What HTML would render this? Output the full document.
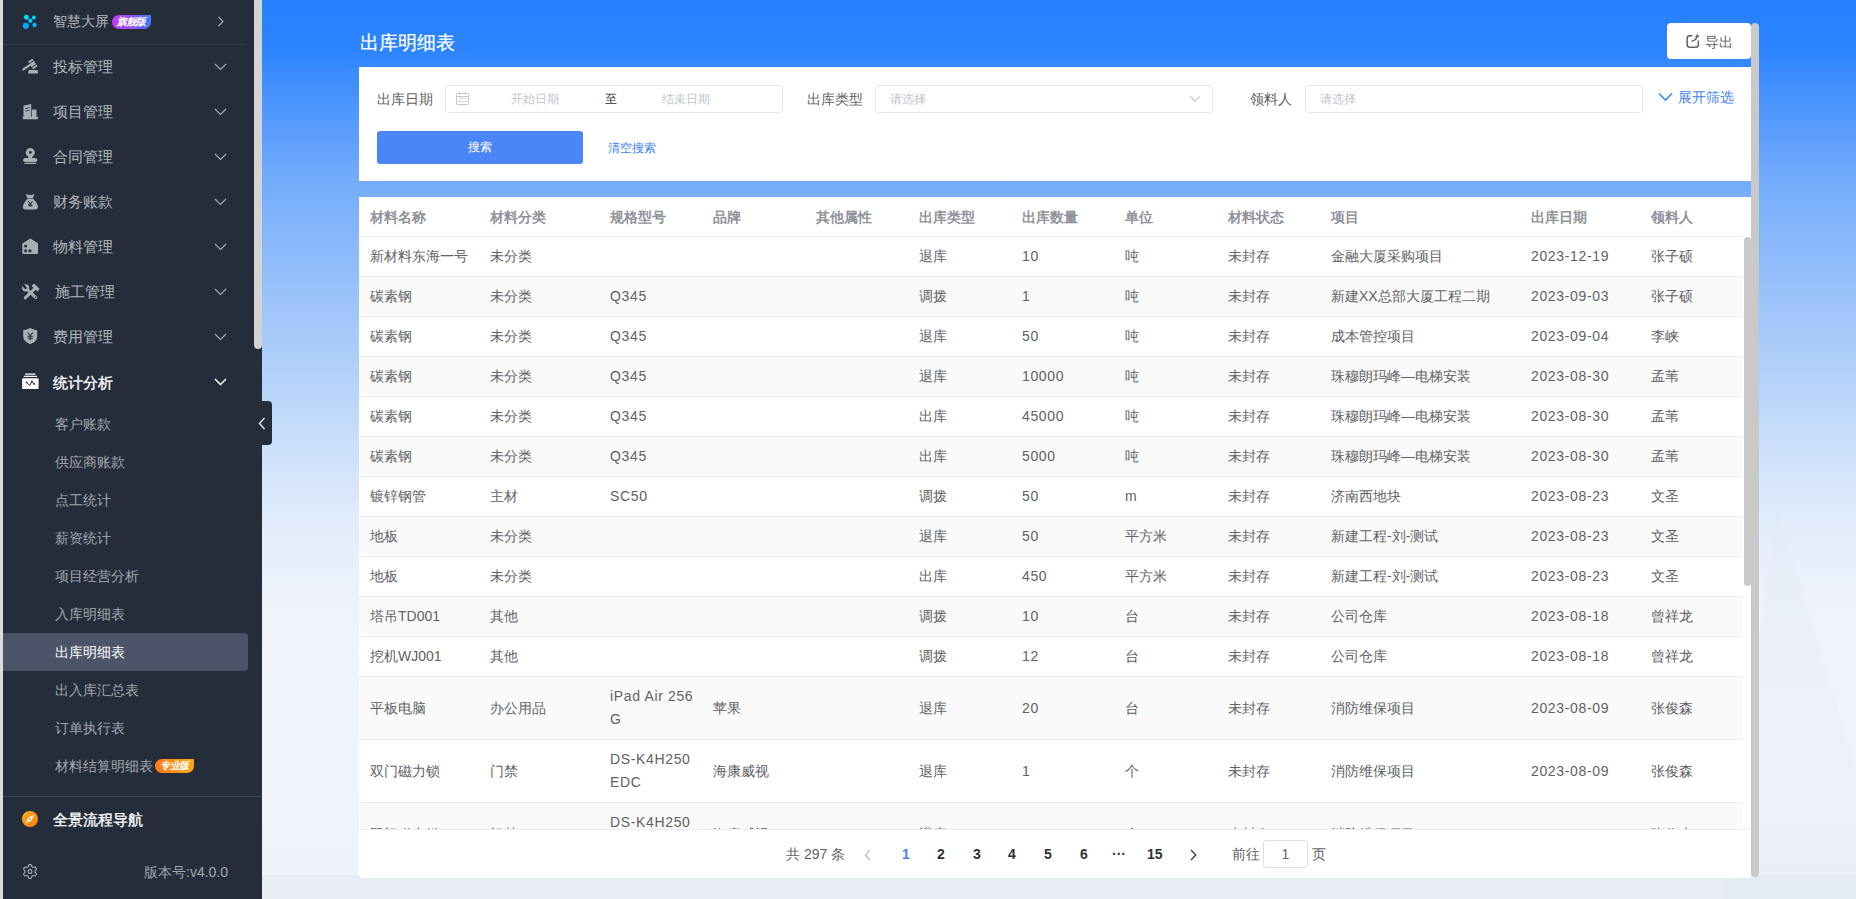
<!DOCTYPE html>
<html><head><meta charset="utf-8">
<style>
*{box-sizing:border-box;margin:0;padding:0}
html,body{width:1856px;height:899px;overflow:hidden;font-family:"Liberation Sans",sans-serif;}
body{position:relative;background:linear-gradient(180deg,#2680ff 0px,#2c84ff 50px,#4a94fd 100px,#6aa6fc 160px,#7ab0fb 200px,#9cc3fa 300px,#c2dafa 420px,#dfeafb 510px,#eef3fb 600px,#f1f5fb 780px,#eef2f8 899px);}
.a{position:absolute;white-space:nowrap}
#side{position:absolute;left:0;top:0;width:262px;height:899px;background:#252d3b}
.mt{position:absolute;left:53px;font-size:15px;line-height:20px;color:#b3b8bd;white-space:nowrap}
.ic{position:absolute;left:22px;width:16px;height:16px}
.chev{position:absolute;left:214px;width:13px;height:8px}
.st{position:absolute;left:55px;font-size:14px;line-height:18px;color:#a3a8ae;white-space:nowrap}
.card{position:absolute;background:#fff}
.lbl{position:absolute;font-size:14px;line-height:18px;color:#606266;white-space:nowrap}
.inp{position:absolute;border:1px solid #e4e7ed;border-radius:4px;background:#fff}
.ph{position:absolute;font-size:12px;line-height:16px;color:#c0c4cc;white-space:nowrap}
.th{position:absolute;top:0;height:39px;padding-left:11px;font-size:14px;font-weight:bold;line-height:40px;color:#909399;white-space:nowrap}
.tr{position:absolute;left:0;width:1384px;border-bottom:1px solid #ebeef5}
.td{position:absolute;top:0;padding:8px 10px 8px 11px;font-size:14px;line-height:23px;color:#606266;display:flex;align-items:center}
.td span{white-space:nowrap}
.pg{position:absolute;top:648px;font-size:14px;line-height:18px;font-weight:bold;white-space:nowrap}
</style></head><body>
<div id="side">
  <div class="a" style="left:0;top:0;width:3px;height:899px;background:#dcdcdc"></div>
  <div class="a" style="left:254px;top:0;width:8px;height:349px;background:#d3d3d3;border-radius:0 0 4px 4px"></div>
  <svg class="ic" style="top:14px;width:16px;height:16px" viewBox="0 0 16 16"><circle cx="4.4" cy="3.2" r="2.45" fill="#00e3f6"/><circle cx="11.9" cy="3.5" r="1.9" fill="#00d6f7"/><circle cx="8.3" cy="6.8" r="2.2" fill="#00c6f9"/><circle cx="3.9" cy="11.8" r="3.1" fill="#00a4ff"/><circle cx="12.5" cy="11" r="2.2" fill="#00b4fb"/></svg>
  <div class="mt" style="top:12px;font-size:14px;line-height:18px">智慧大屏</div>
  <div class="a" style="left:112px;top:15px;width:39px;height:14px;border-radius:7px 0 7px 7px;background:linear-gradient(90deg,#c83af2,#8d52f6 55%,#3a7cff);color:#fff;font-size:10px;line-height:14px;font-style:italic;font-weight:bold;text-align:center;letter-spacing:-0.5px">旗舰版</div>
  <svg class="a" style="left:217px;top:16px" width="8" height="11" viewBox="0 0 8 11"><path d="M1.5 1 L6 5.5 L1.5 10" fill="none" stroke="#a3a8ae" stroke-width="1.2"/></svg>
  <div class="a" style="left:4px;top:44px;width:242px;height:1px;background:#2f3b4d"></div>
<svg class="ic" style="top:59px" viewBox="0 0 16 16"><g fill="#a9afb4"><g transform="rotate(-33 10.75 5)"><rect x="8.05" y="0.4" width="5.4" height="9.2" rx="0.6"/></g><path d="M6.8 10.9 H15.4 L16.2 14.4 H6 z"/></g><path d="M1.3 10.4 L8.6 5.6" stroke="#a9afb4" stroke-width="2.2" stroke-linecap="round"/><g transform="rotate(-33 10.75 5)"><path d="M8 2.7 H13.5 M8 7.3 H13.5" stroke="#252d3b" stroke-width="0.9"/></g></svg>
<div class="mt" style="top:57px">投标管理</div>
<svg class="chev" style="top:63px" viewBox="0 0 13 8"><path d="M1 1 L6.5 6.5 L12 1" fill="none" stroke="#a3a8ae" stroke-width="1.2"/></svg>
<svg class="ic" style="top:104px" viewBox="0 0 16 16"><g fill="#a9afb4"><path d="M1.5 1.8 L9.2 0 V14 H1.5z"/><rect x="9.9" y="5.6" width="4.6" height="8.4"/><rect x="0.8" y="12.8" width="15.2" height="2.4" rx="0.5"/></g><path d="M3.3 4.6 L7.6 3.6 M3.3 7.1 L7.6 6.3" stroke="#252d3b" stroke-width="0.9"/></svg>
<div class="mt" style="top:102px">项目管理</div>
<svg class="chev" style="top:108px" viewBox="0 0 13 8"><path d="M1 1 L6.5 6.5 L12 1" fill="none" stroke="#a3a8ae" stroke-width="1.2"/></svg>
<svg class="ic" style="top:148px" viewBox="0 0 16 16"><g fill="#a9afb4"><circle cx="8.3" cy="4.6" r="4.5"/><rect x="6.3" y="7" width="4" height="3.6"/><rect x="1.2" y="9.9" width="14" height="4.2" rx="1.8"/><rect x="2.3" y="14.8" width="12.1" height="1.4" rx="0.6"/></g><circle cx="8.3" cy="4.4" r="1.4" fill="#252d3b"/></svg>
<div class="mt" style="top:147px">合同管理</div>
<svg class="chev" style="top:153px" viewBox="0 0 13 8"><path d="M1 1 L6.5 6.5 L12 1" fill="none" stroke="#a3a8ae" stroke-width="1.2"/></svg>
<svg class="ic" style="top:194px" viewBox="0 0 16 16"><g fill="#a9afb4"><path d="M3.6 0 Q8.3 2.2 12.4 0 Q11.6 2.6 10.8 4.4 H5.6 Q4.6 2.6 3.6 0z"/><path d="M5.2 5 H11.4 Q16.2 9.8 16 13.6 Q15.8 15.6 13.6 15.6 H3.2 Q1 15.6 0.8 13.6 Q0.6 9.8 5.2 5z"/></g><path d="M6 7 L8.3 9.5 L10.6 7 M8.3 9.5 V12.8 M6.2 10.1 H10.4 M6.2 11.7 H10.4" fill="none" stroke="#252d3b" stroke-width="1"/></svg>
<div class="mt" style="top:192px">财务账款</div>
<svg class="chev" style="top:198px" viewBox="0 0 13 8"><path d="M1 1 L6.5 6.5 L12 1" fill="none" stroke="#a3a8ae" stroke-width="1.2"/></svg>
<svg class="ic" style="top:238px" viewBox="0 0 16 16"><path fill="#a9afb4" d="M8.3 0.4 L16.2 5.4 V14.8 Q16.2 16 15 16 H1.5 Q0.3 16 0.3 14.8 V5.4z"/><g fill="#252d3b"><rect x="2.3" y="6.8" width="2.7" height="2.5" rx="0.4"/><rect x="2.3" y="11.6" width="2.7" height="2.6" rx="0.4"/><rect x="6.5" y="11.6" width="2.9" height="2.6" rx="0.4"/></g></svg>
<div class="mt" style="top:237px">物料管理</div>
<svg class="chev" style="top:243px" viewBox="0 0 13 8"><path d="M1 1 L6.5 6.5 L12 1" fill="none" stroke="#a3a8ae" stroke-width="1.2"/></svg>
<svg class="ic" style="top:284px;width:18px" viewBox="0 0 18 16"><g stroke="#a9afb4" stroke-width="3" stroke-linecap="round"><path d="M4.6 5 L13.8 13.6"/><path d="M12.4 5 L3.2 13.8"/></g><g fill="#a9afb4"><circle cx="3.6" cy="3.8" r="3.6"/><g transform="rotate(45 13.6 3.4)"><rect x="9.6" y="1.6" width="8" height="3.6" rx="0.6"/></g></g><path d="M1 1.2 L3.6 3.8" stroke="#252d3b" stroke-width="2.4" stroke-linecap="round"/><circle cx="13.4" cy="13.2" r="0.8" fill="#252d3b"/></svg>
<div class="mt" style="top:282px;left:55px">施工管理</div>
<svg class="chev" style="top:288px" viewBox="0 0 13 8"><path d="M1 1 L6.5 6.5 L12 1" fill="none" stroke="#a3a8ae" stroke-width="1.2"/></svg>
<svg class="ic" style="top:328px" viewBox="0 0 16 16"><path fill="#a9afb4" d="M8.2 0 Q11.4 1.8 15.2 2.2 V8.2 Q15.2 13.4 8.2 16.2 Q1.2 13.4 1.2 8.2 V2.2 Q5 1.8 8.2 0z"/><path d="M5.5 4.5 L8.2 7.5 L10.9 4.5 M8.2 7.5 V12.2 M5.6 8.3 H10.8 M5.6 10.2 H10.8" fill="none" stroke="#252d3b" stroke-width="1.05"/></svg>
<div class="mt" style="top:327px">费用管理</div>
<svg class="chev" style="top:333px" viewBox="0 0 13 8"><path d="M1 1 L6.5 6.5 L12 1" fill="none" stroke="#a3a8ae" stroke-width="1.2"/></svg>
<svg class="ic" style="top:373px;width:17px" viewBox="0 0 17 16"><g fill="#fff"><rect x="3" y="0.4" width="10.6" height="1.4" rx="0.7"/><rect x="1.6" y="2.8" width="13.4" height="1.2" rx="0.6"/><rect x="0.1" y="5.3" width="16.5" height="11.1" rx="1.2"/></g><path d="M4.6 9.3 L7.7 12.6 L9.9 8.4 L12.1 11" fill="none" stroke="#252d3b" stroke-width="1"/><g fill="#252d3b"><circle cx="4.6" cy="9.3" r="0.9"/><circle cx="9.9" cy="8.4" r="0.9"/><circle cx="12.1" cy="11" r="0.9"/></g></svg>
<div class="mt" style="top:373px;color:#fff;-webkit-text-stroke:0.35px #fff">统计分析</div>
<svg class="chev" style="top:378px" viewBox="0 0 13 8"><path d="M1 1 L6.5 6.5 L12 1" fill="none" stroke="#fff" stroke-width="1.5"/></svg>
<div class="st" style="top:415px">客户账款</div>
<div class="st" style="top:453px">供应商账款</div>
<div class="st" style="top:491px">点工统计</div>
<div class="st" style="top:529px">薪资统计</div>
<div class="st" style="top:567px">项目经营分析</div>
<div class="st" style="top:605px">入库明细表</div>
<div class="a" style="left:3px;top:633px;width:245px;height:38px;background:#4b5469;border-radius:0 4px 4px 0"></div>
<div class="st" style="top:643px;color:#fff">出库明细表</div>
<div class="st" style="top:681px">出入库汇总表</div>
<div class="st" style="top:719px">订单执行表</div>
<div class="st" style="top:757px">材料结算明细表</div>
<div class="a" style="left:155px;top:759px;width:39px;height:14px;border-radius:7px 0 7px 7px;background:linear-gradient(90deg,#ff7a1a,#ffa514);color:#fff;font-size:10px;line-height:14px;font-style:italic;font-weight:bold;text-align:center;letter-spacing:-0.5px">专业版</div>
<div class="a" style="left:3px;top:796px;width:259px;height:1px;background:#3a4354"></div>
<svg class="ic" style="top:811px" viewBox="0 0 16 16"><defs><linearGradient id="og" x1="0" y1="0" x2="1" y2="1"><stop offset="0" stop-color="#ffb21a"/><stop offset="1" stop-color="#ff7a0a"/></linearGradient></defs><circle cx="8" cy="8" r="8" fill="url(#og)"/><path d="M12.2 3.8 L9.6 9.6 L3.8 12.2 L6.4 6.4z" fill="#fff"/><circle cx="8" cy="8" r="1" fill="#ff8c10"/></svg>
<div class="mt" style="top:810px;font-size:15px;color:#fff;-webkit-text-stroke:0.35px #fff">全景流程导航</div>
<svg class="ic" style="top:864px;width:16px;height:15px" viewBox="0 0 16 15"><path d="M13.10 7.50 L13.09 7.77 L13.07 8.03 L13.09 8.31 L13.43 8.65 L13.80 9.05 L14.13 9.49 L14.39 9.95 L14.30 10.31 L14.15 10.63 L13.98 10.95 L13.79 11.26 L13.58 11.56 L13.32 11.81 L12.79 11.81 L12.24 11.74 L11.72 11.63 L11.24 11.51 L11.00 11.63 L10.78 11.78 L10.55 11.92 L10.32 12.04 L10.07 12.16 L9.85 12.31 L9.72 12.78 L9.55 13.30 L9.34 13.80 L9.07 14.26 L8.72 14.36 L8.36 14.39 L8.00 14.40 L7.64 14.39 L7.28 14.36 L6.93 14.26 L6.66 13.80 L6.45 13.30 L6.28 12.78 L6.15 12.31 L5.93 12.16 L5.68 12.04 L5.45 11.92 L5.22 11.78 L5.00 11.63 L4.76 11.51 L4.28 11.63 L3.76 11.74 L3.21 11.81 L2.68 11.81 L2.42 11.56 L2.21 11.26 L2.02 10.95 L1.85 10.63 L1.70 10.31 L1.61 9.95 L1.87 9.49 L2.20 9.05 L2.57 8.65 L2.91 8.31 L2.93 8.03 L2.91 7.77 L2.90 7.50 L2.91 7.23 L2.93 6.97 L2.91 6.69 L2.57 6.35 L2.20 5.95 L1.87 5.51 L1.61 5.05 L1.70 4.69 L1.85 4.37 L2.02 4.05 L2.21 3.74 L2.42 3.44 L2.68 3.19 L3.21 3.19 L3.76 3.26 L4.28 3.37 L4.76 3.49 L5.00 3.37 L5.22 3.22 L5.45 3.08 L5.68 2.96 L5.93 2.84 L6.15 2.69 L6.28 2.22 L6.45 1.70 L6.66 1.20 L6.93 0.74 L7.28 0.64 L7.64 0.61 L8.00 0.60 L8.36 0.61 L8.72 0.64 L9.07 0.74 L9.34 1.20 L9.55 1.70 L9.72 2.22 L9.85 2.69 L10.07 2.84 L10.32 2.96 L10.55 3.08 L10.78 3.22 L11.00 3.37 L11.24 3.49 L11.72 3.37 L12.24 3.26 L12.79 3.19 L13.32 3.19 L13.58 3.44 L13.79 3.74 L13.98 4.05 L14.15 4.37 L14.30 4.69 L14.39 5.05 L14.13 5.51 L13.80 5.95 L13.43 6.35 L13.09 6.69 L13.07 6.97 L13.09 7.23z" fill="none" stroke="#a3a8ae" stroke-width="1.2" stroke-linejoin="round"/><circle cx="8" cy="7.5" r="1.9" fill="none" stroke="#a3a8ae" stroke-width="1.2"/></svg>
<div class="st" style="left:144px;top:863px;color:#a3a8ae">版本号:v4.0.0</div>
</div>
<div class="a" style="left:248px;top:401px;width:24px;height:44px;background:#252d3b;border-radius:0 4px 4px 0"></div>
<svg class="a" style="left:258px;top:417px" width="8" height="13" viewBox="0 0 8 13"><path d="M6.5 1 L1.5 6.5 L6.5 12" fill="none" stroke="#e6e8eb" stroke-width="1.4"/></svg>
<svg class="a" style="left:262px;top:420px" width="1594" height="479" viewBox="0 0 1594 479"><path d="M1515 90 L1594 350 L1594 479 L1460 479z" fill="#dfe6f0" opacity="0.25"/><path d="M0 455 h1594 v24 h-1594z" fill="#dde4ee" opacity="0.35"/></svg>
<div class="a" style="left:360px;top:31px;font-size:19px;line-height:23px;color:#fff;-webkit-text-stroke:0.25px #fff">出库明细表</div>
<div class="a" style="left:1667px;top:23px;width:84px;height:36px;background:#fff;border-radius:4px"></div>
<svg class="a" style="left:1685px;top:33px" width="16" height="16" viewBox="0 0 16 16"><path d="M7.3 2.65 H4.65 Q2.15 2.65 2.15 5.15 V11.65 Q2.15 14.15 4.65 14.15 H10.85 Q13.35 14.15 13.35 11.65 V7.4" fill="none" stroke="#606266" stroke-width="1.5"/><path d="M6.6 8.3 Q10.8 7.6 12 3.4" fill="none" stroke="#606266" stroke-width="1.5"/><path d="M12.2 0.9 L14.6 4.2 L10.1 3.9z" fill="#606266"/></svg>
<div class="a" style="left:1705px;top:33px;font-size:14px;line-height:18px;color:#606266">导出</div>
<div class="a" style="left:1751px;top:23px;width:8px;height:854px;background:#c9c9c9;border-radius:4px"></div>
<div class="card" style="left:359px;top:67px;width:1392px;height:114px"></div>
<div class="lbl" style="left:377px;top:90px">出库日期</div>
<div class="inp" style="left:445px;top:85px;width:338px;height:28px"></div>
<svg class="a" style="left:456px;top:92px" width="13" height="13" viewBox="0 0 13 13"><g fill="none" stroke="#c0c4cc" stroke-width="1"><rect x="0.5" y="1.5" width="12" height="11" rx="1"/><path d="M0.5 4.5 H12.5 M3.5 0 V2.5 M9.5 0 V2.5"/></g><g fill="#c0c4cc"><rect x="2.5" y="6.2" width="2" height="1"/><rect x="5.5" y="6.2" width="2" height="1"/><rect x="8.5" y="6.2" width="2" height="1"/><rect x="2.5" y="9" width="2" height="1"/><rect x="5.5" y="9" width="2" height="1"/><rect x="8.5" y="9" width="2" height="1"/></g></svg>
<div class="ph" style="left:511px;top:91px">开始日期</div>
<div class="a" style="left:605px;top:91px;font-size:12px;line-height:16px;color:#303133">至</div>
<div class="ph" style="left:662px;top:91px">结束日期</div>
<div class="lbl" style="left:807px;top:90px">出库类型</div>
<div class="inp" style="left:875px;top:85px;width:338px;height:28px"></div>
<div class="ph" style="left:890px;top:91px">请选择</div>
<svg class="a" style="left:1189px;top:95px" width="12" height="8" viewBox="0 0 12 8"><path d="M1 1.2 L6 6.2 L11 1.2" fill="none" stroke="#c0c4cc" stroke-width="1.1"/></svg>
<div class="lbl" style="left:1250px;top:90px">领料人</div>
<div class="inp" style="left:1305px;top:85px;width:338px;height:28px"></div>
<div class="ph" style="left:1320px;top:91px">请选择</div>
<svg class="a" style="left:1658px;top:92px" width="15" height="10" viewBox="0 0 15 10"><path d="M1 1.5 L7.5 8 L14 1.5" fill="none" stroke="#3f83f8" stroke-width="1.6"/></svg>
<div class="a" style="left:1678px;top:88px;font-size:14px;line-height:18px;color:#3f83f8">展开筛选</div>
<div class="a" style="left:377px;top:131px;width:206px;height:33px;background:#4a86f5;border-radius:3px;color:#fff;font-size:12px;line-height:33px;text-align:center">搜索</div>
<div class="a" style="left:608px;top:140px;font-size:12px;line-height:16px;color:#3f83f8">清空搜索</div>
<div class="card" style="left:359px;top:197px;width:1392px;height:681px;border-radius:0 0 4px 4px;overflow:hidden" id="tbl">
<div class="th" style="left:0px;width:120px">材料名称</div>
<div class="th" style="left:120px;width:120px">材料分类</div>
<div class="th" style="left:240px;width:103px">规格型号</div>
<div class="th" style="left:343px;width:103px">品牌</div>
<div class="th" style="left:446px;width:103px">其他属性</div>
<div class="th" style="left:549px;width:103px">出库类型</div>
<div class="th" style="left:652px;width:103px">出库数量</div>
<div class="th" style="left:755px;width:103px">单位</div>
<div class="th" style="left:858px;width:103px">材料状态</div>
<div class="th" style="left:961px;width:200px">项目</div>
<div class="th" style="left:1161px;width:120px">出库日期</div>
<div class="th" style="left:1281px;width:101px">领料人</div>
<div class="a" style="left:0;top:39px;width:1384px;height:1px;background:#ebeef5"></div>
<div class="tr" style="top:40px;height:40px;background:#fff">
<div class="td" style="left:0px;width:120px;height:39px"><span>新材料东海一号</span></div>
<div class="td" style="left:120px;width:120px;height:39px"><span>未分类</span></div>
<div class="td" style="left:240px;width:103px;height:39px"><span></span></div>
<div class="td" style="left:343px;width:103px;height:39px"><span></span></div>
<div class="td" style="left:446px;width:103px;height:39px"><span></span></div>
<div class="td" style="left:549px;width:103px;height:39px"><span>退库</span></div>
<div class="td" style="left:652px;width:103px;height:39px;letter-spacing:0.65px"><span>10</span></div>
<div class="td" style="left:755px;width:103px;height:39px"><span>吨</span></div>
<div class="td" style="left:858px;width:103px;height:39px"><span>未封存</span></div>
<div class="td" style="left:961px;width:200px;height:39px"><span>金融大厦采购项目</span></div>
<div class="td" style="left:1161px;width:120px;height:39px;letter-spacing:0.65px"><span>2023-12-19</span></div>
<div class="td" style="left:1281px;width:101px;height:39px"><span>张子硕</span></div>
</div>
<div class="tr" style="top:80px;height:40px;background:#fafafa">
<div class="td" style="left:0px;width:120px;height:39px"><span>碳素钢</span></div>
<div class="td" style="left:120px;width:120px;height:39px"><span>未分类</span></div>
<div class="td" style="left:240px;width:103px;height:39px;letter-spacing:0.65px"><span>Q345</span></div>
<div class="td" style="left:343px;width:103px;height:39px"><span></span></div>
<div class="td" style="left:446px;width:103px;height:39px"><span></span></div>
<div class="td" style="left:549px;width:103px;height:39px"><span>调拨</span></div>
<div class="td" style="left:652px;width:103px;height:39px;letter-spacing:0.65px"><span>1</span></div>
<div class="td" style="left:755px;width:103px;height:39px"><span>吨</span></div>
<div class="td" style="left:858px;width:103px;height:39px"><span>未封存</span></div>
<div class="td" style="left:961px;width:200px;height:39px"><span>新建XX总部大厦工程二期</span></div>
<div class="td" style="left:1161px;width:120px;height:39px;letter-spacing:0.65px"><span>2023-09-03</span></div>
<div class="td" style="left:1281px;width:101px;height:39px"><span>张子硕</span></div>
</div>
<div class="tr" style="top:120px;height:40px;background:#fff">
<div class="td" style="left:0px;width:120px;height:39px"><span>碳素钢</span></div>
<div class="td" style="left:120px;width:120px;height:39px"><span>未分类</span></div>
<div class="td" style="left:240px;width:103px;height:39px;letter-spacing:0.65px"><span>Q345</span></div>
<div class="td" style="left:343px;width:103px;height:39px"><span></span></div>
<div class="td" style="left:446px;width:103px;height:39px"><span></span></div>
<div class="td" style="left:549px;width:103px;height:39px"><span>退库</span></div>
<div class="td" style="left:652px;width:103px;height:39px;letter-spacing:0.65px"><span>50</span></div>
<div class="td" style="left:755px;width:103px;height:39px"><span>吨</span></div>
<div class="td" style="left:858px;width:103px;height:39px"><span>未封存</span></div>
<div class="td" style="left:961px;width:200px;height:39px"><span>成本管控项目</span></div>
<div class="td" style="left:1161px;width:120px;height:39px;letter-spacing:0.65px"><span>2023-09-04</span></div>
<div class="td" style="left:1281px;width:101px;height:39px"><span>李峡</span></div>
</div>
<div class="tr" style="top:160px;height:40px;background:#fafafa">
<div class="td" style="left:0px;width:120px;height:39px"><span>碳素钢</span></div>
<div class="td" style="left:120px;width:120px;height:39px"><span>未分类</span></div>
<div class="td" style="left:240px;width:103px;height:39px;letter-spacing:0.65px"><span>Q345</span></div>
<div class="td" style="left:343px;width:103px;height:39px"><span></span></div>
<div class="td" style="left:446px;width:103px;height:39px"><span></span></div>
<div class="td" style="left:549px;width:103px;height:39px"><span>退库</span></div>
<div class="td" style="left:652px;width:103px;height:39px;letter-spacing:0.65px"><span>10000</span></div>
<div class="td" style="left:755px;width:103px;height:39px"><span>吨</span></div>
<div class="td" style="left:858px;width:103px;height:39px"><span>未封存</span></div>
<div class="td" style="left:961px;width:200px;height:39px"><span>珠穆朗玛峰—电梯安装</span></div>
<div class="td" style="left:1161px;width:120px;height:39px;letter-spacing:0.65px"><span>2023-08-30</span></div>
<div class="td" style="left:1281px;width:101px;height:39px"><span>孟苇</span></div>
</div>
<div class="tr" style="top:200px;height:40px;background:#fff">
<div class="td" style="left:0px;width:120px;height:39px"><span>碳素钢</span></div>
<div class="td" style="left:120px;width:120px;height:39px"><span>未分类</span></div>
<div class="td" style="left:240px;width:103px;height:39px;letter-spacing:0.65px"><span>Q345</span></div>
<div class="td" style="left:343px;width:103px;height:39px"><span></span></div>
<div class="td" style="left:446px;width:103px;height:39px"><span></span></div>
<div class="td" style="left:549px;width:103px;height:39px"><span>出库</span></div>
<div class="td" style="left:652px;width:103px;height:39px;letter-spacing:0.65px"><span>45000</span></div>
<div class="td" style="left:755px;width:103px;height:39px"><span>吨</span></div>
<div class="td" style="left:858px;width:103px;height:39px"><span>未封存</span></div>
<div class="td" style="left:961px;width:200px;height:39px"><span>珠穆朗玛峰—电梯安装</span></div>
<div class="td" style="left:1161px;width:120px;height:39px;letter-spacing:0.65px"><span>2023-08-30</span></div>
<div class="td" style="left:1281px;width:101px;height:39px"><span>孟苇</span></div>
</div>
<div class="tr" style="top:240px;height:40px;background:#fafafa">
<div class="td" style="left:0px;width:120px;height:39px"><span>碳素钢</span></div>
<div class="td" style="left:120px;width:120px;height:39px"><span>未分类</span></div>
<div class="td" style="left:240px;width:103px;height:39px;letter-spacing:0.65px"><span>Q345</span></div>
<div class="td" style="left:343px;width:103px;height:39px"><span></span></div>
<div class="td" style="left:446px;width:103px;height:39px"><span></span></div>
<div class="td" style="left:549px;width:103px;height:39px"><span>出库</span></div>
<div class="td" style="left:652px;width:103px;height:39px;letter-spacing:0.65px"><span>5000</span></div>
<div class="td" style="left:755px;width:103px;height:39px"><span>吨</span></div>
<div class="td" style="left:858px;width:103px;height:39px"><span>未封存</span></div>
<div class="td" style="left:961px;width:200px;height:39px"><span>珠穆朗玛峰—电梯安装</span></div>
<div class="td" style="left:1161px;width:120px;height:39px;letter-spacing:0.65px"><span>2023-08-30</span></div>
<div class="td" style="left:1281px;width:101px;height:39px"><span>孟苇</span></div>
</div>
<div class="tr" style="top:280px;height:40px;background:#fff">
<div class="td" style="left:0px;width:120px;height:39px"><span>镀锌钢管</span></div>
<div class="td" style="left:120px;width:120px;height:39px"><span>主材</span></div>
<div class="td" style="left:240px;width:103px;height:39px;letter-spacing:0.65px"><span>SC50</span></div>
<div class="td" style="left:343px;width:103px;height:39px"><span></span></div>
<div class="td" style="left:446px;width:103px;height:39px"><span></span></div>
<div class="td" style="left:549px;width:103px;height:39px"><span>调拨</span></div>
<div class="td" style="left:652px;width:103px;height:39px;letter-spacing:0.65px"><span>50</span></div>
<div class="td" style="left:755px;width:103px;height:39px;letter-spacing:0.65px"><span>m</span></div>
<div class="td" style="left:858px;width:103px;height:39px"><span>未封存</span></div>
<div class="td" style="left:961px;width:200px;height:39px"><span>济南西地块</span></div>
<div class="td" style="left:1161px;width:120px;height:39px;letter-spacing:0.65px"><span>2023-08-23</span></div>
<div class="td" style="left:1281px;width:101px;height:39px"><span>文圣</span></div>
</div>
<div class="tr" style="top:320px;height:40px;background:#fafafa">
<div class="td" style="left:0px;width:120px;height:39px"><span>地板</span></div>
<div class="td" style="left:120px;width:120px;height:39px"><span>未分类</span></div>
<div class="td" style="left:240px;width:103px;height:39px"><span></span></div>
<div class="td" style="left:343px;width:103px;height:39px"><span></span></div>
<div class="td" style="left:446px;width:103px;height:39px"><span></span></div>
<div class="td" style="left:549px;width:103px;height:39px"><span>退库</span></div>
<div class="td" style="left:652px;width:103px;height:39px;letter-spacing:0.65px"><span>50</span></div>
<div class="td" style="left:755px;width:103px;height:39px"><span>平方米</span></div>
<div class="td" style="left:858px;width:103px;height:39px"><span>未封存</span></div>
<div class="td" style="left:961px;width:200px;height:39px"><span>新建工程-刘-测试</span></div>
<div class="td" style="left:1161px;width:120px;height:39px;letter-spacing:0.65px"><span>2023-08-23</span></div>
<div class="td" style="left:1281px;width:101px;height:39px"><span>文圣</span></div>
</div>
<div class="tr" style="top:360px;height:40px;background:#fff">
<div class="td" style="left:0px;width:120px;height:39px"><span>地板</span></div>
<div class="td" style="left:120px;width:120px;height:39px"><span>未分类</span></div>
<div class="td" style="left:240px;width:103px;height:39px"><span></span></div>
<div class="td" style="left:343px;width:103px;height:39px"><span></span></div>
<div class="td" style="left:446px;width:103px;height:39px"><span></span></div>
<div class="td" style="left:549px;width:103px;height:39px"><span>出库</span></div>
<div class="td" style="left:652px;width:103px;height:39px;letter-spacing:0.65px"><span>450</span></div>
<div class="td" style="left:755px;width:103px;height:39px"><span>平方米</span></div>
<div class="td" style="left:858px;width:103px;height:39px"><span>未封存</span></div>
<div class="td" style="left:961px;width:200px;height:39px"><span>新建工程-刘-测试</span></div>
<div class="td" style="left:1161px;width:120px;height:39px;letter-spacing:0.65px"><span>2023-08-23</span></div>
<div class="td" style="left:1281px;width:101px;height:39px"><span>文圣</span></div>
</div>
<div class="tr" style="top:400px;height:40px;background:#fafafa">
<div class="td" style="left:0px;width:120px;height:39px"><span>塔吊TD001</span></div>
<div class="td" style="left:120px;width:120px;height:39px"><span>其他</span></div>
<div class="td" style="left:240px;width:103px;height:39px"><span></span></div>
<div class="td" style="left:343px;width:103px;height:39px"><span></span></div>
<div class="td" style="left:446px;width:103px;height:39px"><span></span></div>
<div class="td" style="left:549px;width:103px;height:39px"><span>调拨</span></div>
<div class="td" style="left:652px;width:103px;height:39px;letter-spacing:0.65px"><span>10</span></div>
<div class="td" style="left:755px;width:103px;height:39px"><span>台</span></div>
<div class="td" style="left:858px;width:103px;height:39px"><span>未封存</span></div>
<div class="td" style="left:961px;width:200px;height:39px"><span>公司仓库</span></div>
<div class="td" style="left:1161px;width:120px;height:39px;letter-spacing:0.65px"><span>2023-08-18</span></div>
<div class="td" style="left:1281px;width:101px;height:39px"><span>曾祥龙</span></div>
</div>
<div class="tr" style="top:440px;height:40px;background:#fff">
<div class="td" style="left:0px;width:120px;height:39px"><span>挖机WJ001</span></div>
<div class="td" style="left:120px;width:120px;height:39px"><span>其他</span></div>
<div class="td" style="left:240px;width:103px;height:39px"><span></span></div>
<div class="td" style="left:343px;width:103px;height:39px"><span></span></div>
<div class="td" style="left:446px;width:103px;height:39px"><span></span></div>
<div class="td" style="left:549px;width:103px;height:39px"><span>调拨</span></div>
<div class="td" style="left:652px;width:103px;height:39px;letter-spacing:0.65px"><span>12</span></div>
<div class="td" style="left:755px;width:103px;height:39px"><span>台</span></div>
<div class="td" style="left:858px;width:103px;height:39px"><span>未封存</span></div>
<div class="td" style="left:961px;width:200px;height:39px"><span>公司仓库</span></div>
<div class="td" style="left:1161px;width:120px;height:39px;letter-spacing:0.65px"><span>2023-08-18</span></div>
<div class="td" style="left:1281px;width:101px;height:39px"><span>曾祥龙</span></div>
</div>
<div class="tr" style="top:480px;height:63px;background:#fafafa">
<div class="td" style="left:0px;width:120px;height:62px"><span>平板电脑</span></div>
<div class="td" style="left:120px;width:120px;height:62px"><span>办公用品</span></div>
<div class="td" style="left:240px;width:103px;height:62px;letter-spacing:0.65px"><span>iPad Air 256<br>G</span></div>
<div class="td" style="left:343px;width:103px;height:62px"><span>苹果</span></div>
<div class="td" style="left:446px;width:103px;height:62px"><span></span></div>
<div class="td" style="left:549px;width:103px;height:62px"><span>退库</span></div>
<div class="td" style="left:652px;width:103px;height:62px;letter-spacing:0.65px"><span>20</span></div>
<div class="td" style="left:755px;width:103px;height:62px"><span>台</span></div>
<div class="td" style="left:858px;width:103px;height:62px"><span>未封存</span></div>
<div class="td" style="left:961px;width:200px;height:62px"><span>消防维保项目</span></div>
<div class="td" style="left:1161px;width:120px;height:62px;letter-spacing:0.65px"><span>2023-08-09</span></div>
<div class="td" style="left:1281px;width:101px;height:62px"><span>张俊森</span></div>
</div>
<div class="tr" style="top:543px;height:63px;background:#fff">
<div class="td" style="left:0px;width:120px;height:62px"><span>双门磁力锁</span></div>
<div class="td" style="left:120px;width:120px;height:62px"><span>门禁</span></div>
<div class="td" style="left:240px;width:103px;height:62px;letter-spacing:0.65px"><span>DS-K4H250<br>EDC</span></div>
<div class="td" style="left:343px;width:103px;height:62px"><span>海康威视</span></div>
<div class="td" style="left:446px;width:103px;height:62px"><span></span></div>
<div class="td" style="left:549px;width:103px;height:62px"><span>退库</span></div>
<div class="td" style="left:652px;width:103px;height:62px;letter-spacing:0.65px"><span>1</span></div>
<div class="td" style="left:755px;width:103px;height:62px"><span>个</span></div>
<div class="td" style="left:858px;width:103px;height:62px"><span>未封存</span></div>
<div class="td" style="left:961px;width:200px;height:62px"><span>消防维保项目</span></div>
<div class="td" style="left:1161px;width:120px;height:62px;letter-spacing:0.65px"><span>2023-08-09</span></div>
<div class="td" style="left:1281px;width:101px;height:62px"><span>张俊森</span></div>
</div>
<div class="tr" style="top:606px;height:63px;background:#fafafa">
<div class="td" style="left:0px;width:120px;height:62px"><span>双门磁力锁</span></div>
<div class="td" style="left:120px;width:120px;height:62px"><span>门禁</span></div>
<div class="td" style="left:240px;width:103px;height:62px;letter-spacing:0.65px"><span>DS-K4H250<br>EDC</span></div>
<div class="td" style="left:343px;width:103px;height:62px"><span>海康威视</span></div>
<div class="td" style="left:446px;width:103px;height:62px"><span></span></div>
<div class="td" style="left:549px;width:103px;height:62px"><span>退库</span></div>
<div class="td" style="left:652px;width:103px;height:62px;letter-spacing:0.65px"><span>1</span></div>
<div class="td" style="left:755px;width:103px;height:62px"><span>个</span></div>
<div class="td" style="left:858px;width:103px;height:62px"><span>未封存</span></div>
<div class="td" style="left:961px;width:200px;height:62px"><span>消防维保项目</span></div>
<div class="td" style="left:1161px;width:120px;height:62px;letter-spacing:0.65px"><span>2023-08-09</span></div>
<div class="td" style="left:1281px;width:101px;height:62px"><span>张俊森</span></div>
</div>
<div class="a" style="left:0;top:632px;width:1392px;height:49px;background:#fff;border-top:1px solid #ebeef5"></div>
<div class="a" style="left:1385px;top:40px;width:7px;height:349px;background:#c9c9c9;border-radius:4px"></div>
<div class="pg" style="left:427px;color:#606266;font-weight:normal">共 297 条</div>
<svg class="a" style="left:505px;top:652px" width="7" height="12" viewBox="0 0 7 12"><path d="M6 1 L1.2 6 L6 11" fill="none" stroke="#b8bcc4" stroke-width="1.2"/></svg>
<div class="pg" style="left:543px;color:#3f83f8">1</div>
<div class="pg" style="left:578px;color:#303133">2</div>
<div class="pg" style="left:614px;color:#303133">3</div>
<div class="pg" style="left:649px;color:#303133">4</div>
<div class="pg" style="left:685px;color:#303133">5</div>
<div class="pg" style="left:721px;color:#303133">6</div>
<div class="pg" style="left:753px;color:#303133">···</div>
<div class="pg" style="left:788px;color:#303133">15</div>
<svg class="a" style="left:831px;top:652px" width="7" height="12" viewBox="0 0 7 12"><path d="M1 1 L5.8 6 L1 11" fill="none" stroke="#303133" stroke-width="1.2"/></svg>
<div class="pg" style="left:873px;color:#606266;font-weight:normal">前往</div>
<div class="a" style="left:904px;top:643px;width:45px;height:28px;border:1px solid #dcdfe6;border-radius:3px;text-align:center;font-size:14px;line-height:26px;color:#606266">1</div>
<div class="pg" style="left:953px;color:#606266;font-weight:normal">页</div>
</div>
</body></html>
